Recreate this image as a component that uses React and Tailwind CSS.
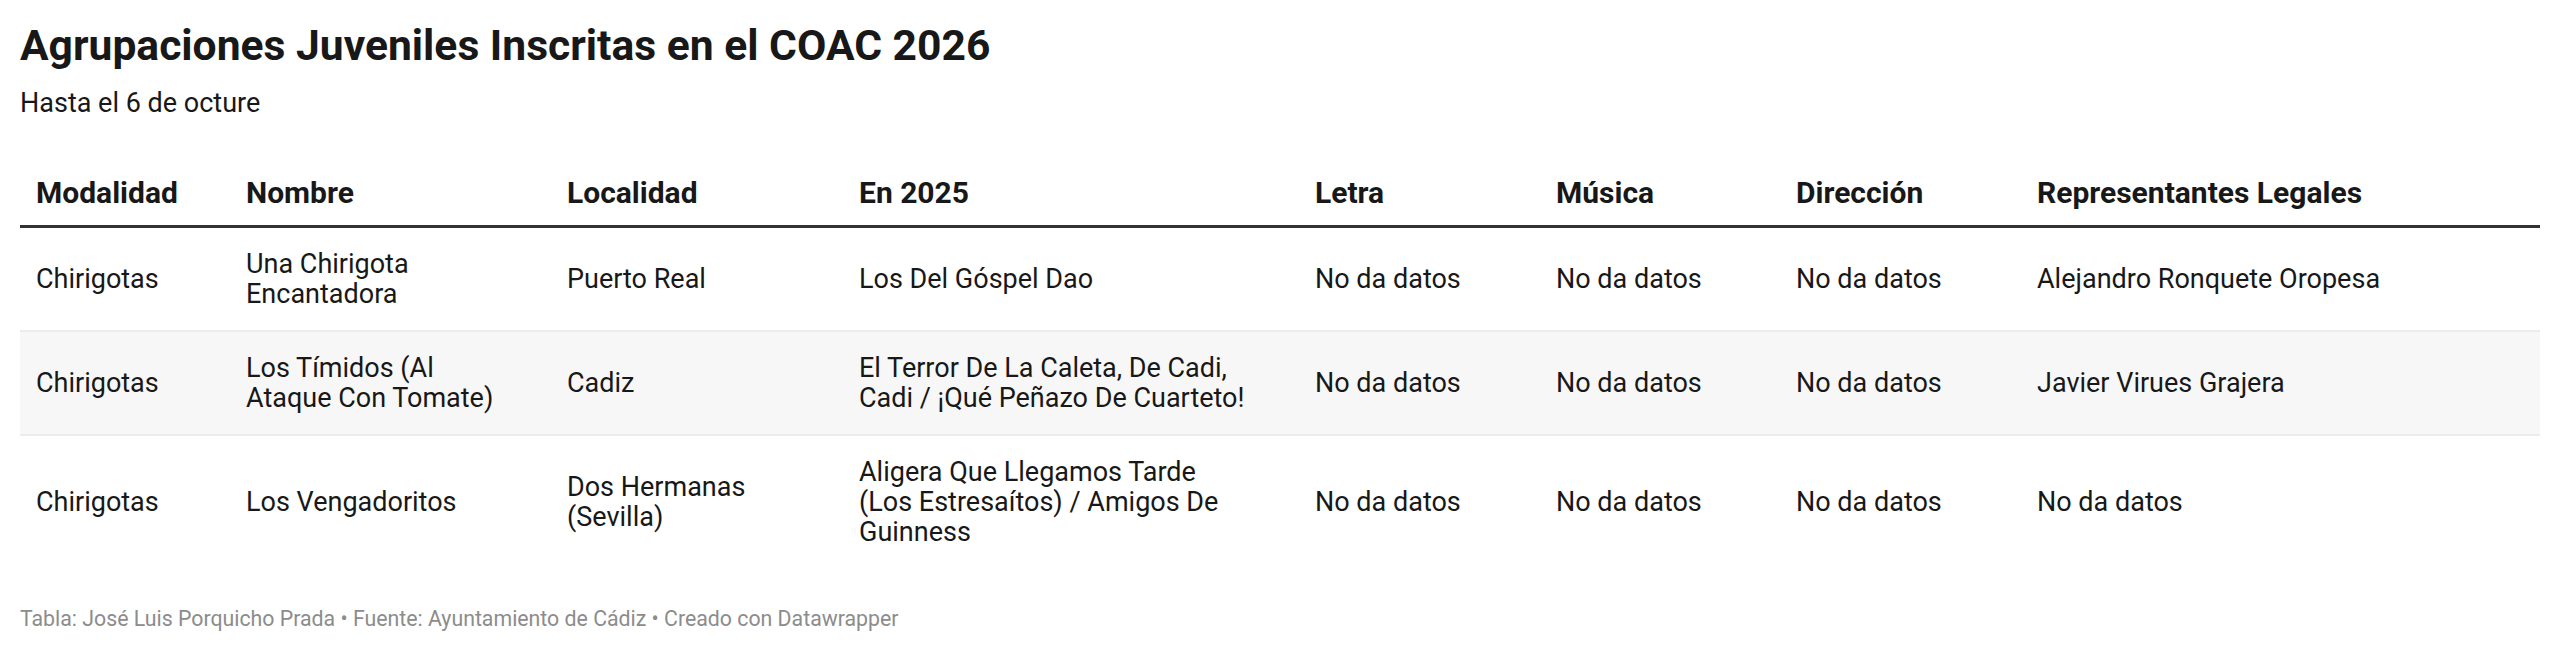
const COLS = 'grid grid-cols-[210px_321px_292px_456px_241px_240px_241px_1fr]';

const headers = ['Modalidad', 'Nombre', 'Localidad', 'En 2025', 'Letra', 'Música', 'Dirección', 'Representantes Legales'];

const rows = [
  ['Chirigotas', 'Una Chirigota Encantadora', 'Puerto Real', 'Los Del Góspel Dao', 'No da datos', 'No da datos', 'No da datos', 'Alejandro Ronquete Oropesa'],
  [
    'Chirigotas',
    'Los Tímidos (Al Ataque Con Tomate)',
    'Cadiz',
    'El Terror De La Caleta, De Cadi, Cadi / ¡Qué Peñazo De Cuarteto!',
    'No da datos',
    'No da datos',
    'No da datos',
    'Javier Virues Grajera',
  ],
  [
    'Chirigotas',
    'Los Vengadoritos',
    'Dos Hermanas (Sevilla)',
    'Aligera Que Llegamos Tarde (Los Estresaítos) / Amigos De Guinness',
    'No da datos',
    'No da datos',
    'No da datos',
    'No da datos',
  ],
];

const innerWidth = ['', 'max-w-[265px]', 'max-w-[250px]', 'max-w-[392px]', '', '', '', ''];

export default function App() {
  return (
    <div className="bg-white px-[20px] pt-[20px] pb-[20px] text-[#181818] font-['Roboto',sans-serif]">
      <h1 className="text-[42.6px] leading-[50px] font-bold">Agrupaciones Juveniles Inscritas en el COAC 2026</h1>
      <p className="mt-[18px] text-[27px] leading-[30px]">Hasta el 6 de octure</p>

      <div className="mt-[60px] text-[27px] leading-[30px]">
        <div className={`${COLS} border-b-[3px] border-[#333333] pb-[17px] text-[30px] font-bold`}>
          {headers.map((h) => (
            <div key={h} className="px-[16px]">
              {h}
            </div>
          ))}
        </div>
        {rows.map((row, i) => (
          <div
            key={i}
            className={`${COLS} border-b-2 border-[#ececec] py-[21px] ${i === 1 ? 'bg-[#f7f7f7]' : 'bg-white'} ${
              i === rows.length - 1 ? 'border-b-transparent' : ''
            }`}
          >
            {row.map((cell, j) => (
              <div key={j} className="px-[16px] flex items-center">
                <div className={innerWidth[j]}>{cell}</div>
              </div>
            ))}
          </div>
        ))}
      </div>

      <div className="mt-[37px] text-[21.3px] leading-[24px] text-[#8c8c8c]">
        Tabla: José Luis Porquicho Prada • Fuente: Ayuntamiento de Cádiz • Creado con Datawrapper
      </div>
    </div>
  );
}
